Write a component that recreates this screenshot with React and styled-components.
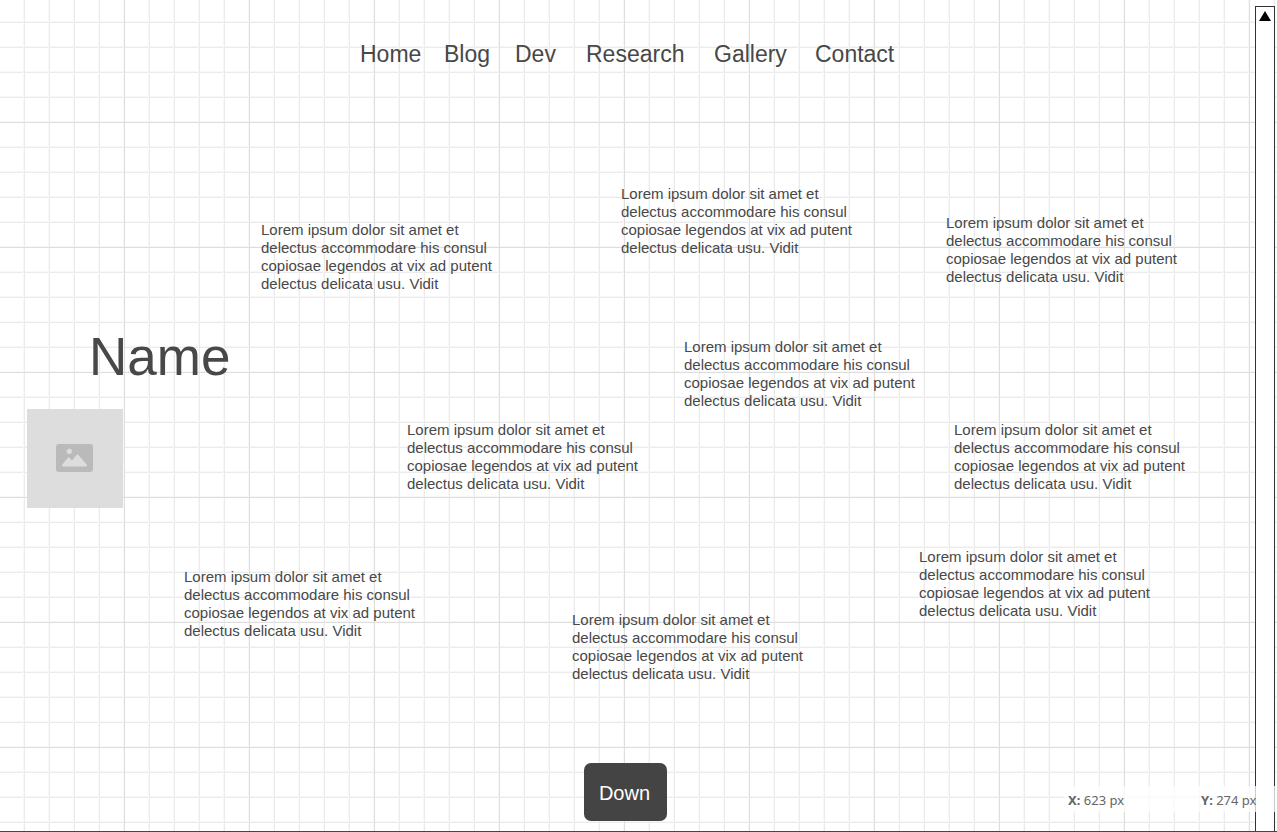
import React from "react";
import styled, { createGlobalStyle } from "styled-components";

const GlobalStyle = createGlobalStyle`
  * { box-sizing: border-box; }
  body {
    margin: 0;
    background: #fff;
    color: #484848;
    font-family: "Liberation Sans", Arial, sans-serif;
  }
`;

const Page = styled.div`
  position: relative;
  display: flex;
  min-height: 100vh;
  border-bottom: 1px solid #444;
  background-image:
    linear-gradient(to right, #dedede 1px, transparent 1px),
    linear-gradient(to bottom, #dedede 1px, transparent 1px),
    linear-gradient(to right, #f8f8f8 1px, #ebebeb 1px, #ebebeb 2px, transparent 2px),
    linear-gradient(to bottom, #f8f8f8 1px, #ebebeb 1px, #ebebeb 2px, transparent 2px);
  background-size: 125px 125px, 125px 125px, 25px 25px, 25px 25px;
  background-position: 124px 0, 0 122px, 23px 0, 0 21px;
`;

const Content = styled.div`
  flex: 1;
  display: flex;
  flex-direction: column;
`;

const Nav = styled.nav`
  display: grid;
  grid-template-columns: 84px 71px 71px 128px 101px 80px;
  justify-content: center;
  padding: 40px 0;
`;

const NavLink = styled.a`
  color: #484848;
  font-size: 23px;
  line-height: 28px;
  text-decoration: none;
`;

const Canvas = styled.main`
  position: relative;
  flex: 1;
  min-height: 600px;
`;

const Title = styled.h1`
  position: absolute;
  left: 89px;
  top: 219px;
  margin: 0;
  font-size: 53px;
  font-weight: 400;
  line-height: 60px;
`;

const Note = styled.p`
  position: absolute;
  left: ${({ $x }) => $x}px;
  top: ${({ $y }) => $y}px;
  margin: 0;
  font-size: 15px;
  line-height: 18px;
  white-space: pre-line;
`;

const ImagePlaceholder = styled.div`
  position: absolute;
  left: 27px;
  top: 301px;
  display: flex;
  align-items: center;
  justify-content: center;
  width: 96px;
  height: 99px;
  padding: 0 1px 1px 0;
  background: #ddd;
`;

const Footer = styled.footer`
  display: flex;
  justify-content: center;
  padding: 0 4px 10px 0;
`;

const DownButton = styled.button`
  width: 83px;
  height: 58px;
  padding: 2px 2px 0 0;
  border: 0;
  border-radius: 7px;
  background: #444;
  color: #fff;
  font-family: inherit;
  font-size: 20px;
`;

const ScrollTrack = styled.aside`
  display: flex;
  justify-content: center;
  align-items: flex-start;
  width: 20px;
  margin: 6px 2px 0 0;
  border: 1px solid #333;
  border-bottom: 0;
  background: #fff;
`;

const ScrollUp = styled.button`
  display: flex;
  padding: 4px 0 0;
  border: 0;
  background: none;
`;

const Readout = styled.div`
  position: absolute;
  right: 0;
  bottom: 19px;
  display: grid;
  grid-template-columns: 133px 76px;
  padding: 2px 0 0 4px;
  background: rgba(255, 255, 255, 0.75);
  color: #666;
  font-family: "Noto Sans", "Open Sans", sans-serif;
  font-size: 13px;
  line-height: 24px;
  white-space: nowrap;
`;

const LINKS = ["Home", "Blog", "Dev", "Research", "Gallery", "Contact"];

const TEXT = [
  "Lorem ipsum dolor sit amet et",
  "delectus accommodare his consul",
  "copiosae legendos at vix ad putent",
  "delectus delicata usu. Vidit",
].join("\n");

const NOTES = [
  { x: 621, y: 77 },
  { x: 946, y: 106 },
  { x: 261, y: 113 },
  { x: 684, y: 230 },
  { x: 407, y: 313 },
  { x: 954, y: 313 },
  { x: 919, y: 440 },
  { x: 184, y: 460 },
  { x: 572, y: 503 },
];

export default function App() {
  return (
    <Page>
      <GlobalStyle />
      <Content>
        <Nav>
          {LINKS.map((label) => (
            <NavLink key={label} href={`#${label.toLowerCase()}`}>{label}</NavLink>
          ))}
        </Nav>
        <Canvas>
          <Title>Name</Title>
          <ImagePlaceholder>
            <svg width="37" height="28" viewBox="0 0 37 28" aria-hidden="true">
              <rect width="37" height="28" rx="3" fill="#bababa" />
              <circle cx="13.3" cy="7.3" r="2.6" fill="#ddd" />
              <path d="M6 21 L12.5 13 L16 16.5 L21.5 10 L31 21 Q31 22.5 29.5 22.5 H7.5 Q6 22.5 6 21 Z" fill="#ddd" />
            </svg>
          </ImagePlaceholder>
          {NOTES.map(({ x, y }) => (
            <Note key={`${x}-${y}`} $x={x} $y={y}>{TEXT}</Note>
          ))}
        </Canvas>
        <Footer>
          <DownButton type="button">Down</DownButton>
        </Footer>
      </Content>
      <ScrollTrack>
        <ScrollUp type="button" aria-label="Scroll up">
          <svg width="12" height="10" viewBox="0 0 12 10" aria-hidden="true">
            <path d="M6 0 L12 10 H0 Z" fill="#000" />
          </svg>
        </ScrollUp>
      </ScrollTrack>
      <Readout>
        <span><b>X:</b> 623 px</span>
        <span><b>Y:</b> 274 px</span>
      </Readout>
    </Page>
  );
}
